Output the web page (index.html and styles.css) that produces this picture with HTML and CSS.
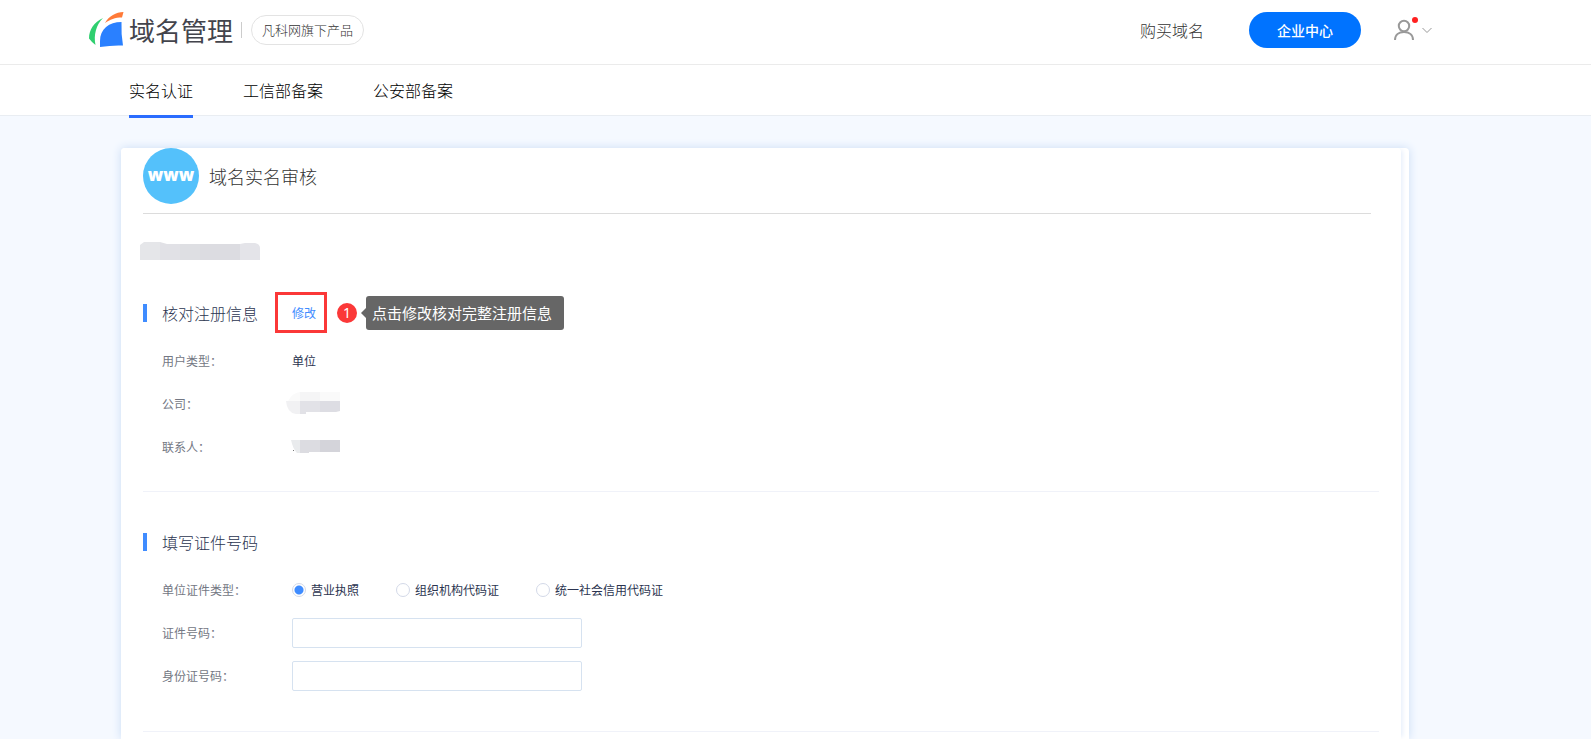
FILE: index.html
```html
<!DOCTYPE html>
<html lang="zh-CN">
<head>
<meta charset="utf-8">
<title>域名管理</title>
<link rel="stylesheet" href="styles.css">
</head>
<body>
<header class="header">
  <div class="brand">
    <svg class="logo" viewBox="0 0 35 36" aria-hidden="true">
      <path fill="#2fcf6f" d="M14 6C5 10 0 18 0 26.500Q3 30.500 6.500 33C4.500 23 7 13 14 6Z"/>
      <path fill="#ff7a38" d="M16 11C20 4 27 0 34.500 0L33 5.500C26 5.500 21 7.500 16 11Z"/>
      <path fill="#2a80ff" d="M32.500 10C20 10 11 17 11 29V35Q23 33 34 33.500Q32 22 32.500 10Z"/>
    </svg>
    <span class="brand-name">域名管理</span>
    <span class="brand-line"></span>
    <a class="pill" href="#">凡科网旗下产品</a>
  </div>
  <div class="actions">
    <a class="buy" href="#">购买域名</a>
    <button class="primary" type="button">企业中心</button>
    <button class="user" type="button" aria-label="账号">
      <svg width="40" height="26" viewBox="0 0 40 26" fill="none" aria-hidden="true">
        <circle cx="10" cy="9" r="5.200" stroke="#999" stroke-width="2"/>
        <path d="M1 23C1 17.500 5 15 10 15S19 17.500 19 23" stroke="#999" stroke-width="2"/>
        <circle cx="21" cy="3" r="3" fill="#ff2020"/>
        <path d="M28.500 11L33 15.500L37.500 11" stroke="#999"/>
      </svg>
    </button>
  </div>
</header>
<nav class="nav">
  <a class="tab tab-active" href="#">实名认证</a>
  <a class="tab" href="#">工信部备案</a>
  <a class="tab" href="#">公安部备案</a>
</nav>
<main class="page">
  <div class="card">
    <div class="panel">
      <div class="panel-head">
        <span class="www">www</span>
        <h1 class="title">域名实名审核</h1>
      </div>
      <svg class="domain-mask" width="120" height="20" viewBox="0 0 120 20" aria-hidden="true">
        <path fill="#e5e6e9" d="M0 4L4 1H20V19H0Z"/>
        <path fill="#e1e1e6" d="M20 1L27 3H40V19H20Z"/>
        <path fill="#dedfe3" d="M40 3H60V19H40Z"/>
        <path fill="#dcdce1" d="M60 3H100V19H60Z"/>
        <path fill="#e4e4e9" d="M100 3L105 2H115Q120 3 120 7V19H100Z"/>
      </svg>
      <section class="section">
        <div class="section-head">
          <h2 class="section-title">核对注册信息</h2>
          <a class="edit" href="#">修改</a>
          <span class="step">1</span>
          <span class="tip">点击修改核对完整注册信息</span>
        </div>
        <div class="row"><span class="label">用户类型<span class="colon">：</span></span><span>单位</span></div>
        <div class="row"><span class="label">公司<span class="colon">：</span></span>
          <svg class="mask" width="54" height="26" viewBox="0 0 54 26" aria-hidden="true">
            <path fill="#fafafa" d="M2 10Q6 2 14 1V10Z"/>
            <path fill="#f5f5f6" d="M14 1H34V10H14Z"/>
            <path fill="#fafafa" d="M34 1H54V10H34Z"/>
            <path fill="#f1f1f3" d="M0 10H14V23H10Q1 22 0 10Z"/>
            <path fill="#e2e2e7" d="M14 10H34V21H20V23H14Z"/>
            <path fill="#dddde3" d="M34 10H54V20L50 21H34Z"/>
          </svg>
        </div>
        <div class="row"><span class="label">联系人<span class="colon">：</span></span>
          <svg class="mask" width="54" height="14" viewBox="0 0 54 14" aria-hidden="true">
            <path fill="#e9ebed" d="M5 0H14V13H11Q7 9 5 0Z"/>
            <path fill="#dcdce1" d="M14 0H34V12H23V13H14Z"/>
            <path fill="#d4d4da" d="M34 0H54V12H34Z"/>
            <path fill="#777" d="M7 10H8V11H7Z"/>
          </svg>
        </div>
      </section>
      <section class="section section-form">
        <div class="section-head">
          <h2 class="section-title">填写证件号码</h2>
        </div>
        <div class="row" role="radiogroup" aria-labelledby="type-label">
          <span class="label" id="type-label">单位证件类型<span class="colon">：</span></span>
          <div class="options">
            <label class="option"><input class="radio" type="radio" name="type" checked>营业执照</label>
            <label class="option"><input class="radio" type="radio" name="type">组织机构代码证</label>
            <label class="option"><input class="radio" type="radio" name="type">统一社会信用代码证</label>
          </div>
        </div>
        <div class="row"><label class="label" for="cert">证件号码<span class="colon">：</span></label><input class="field" id="cert" type="text"></div>
        <div class="row"><label class="label" for="idno">身份证号码<span class="colon">：</span></label><input class="field" id="idno" type="text"></div>
      </section>
    </div>
  </div>
</main>
</body>
</html>
```
FILE: styles.css
```css
* {
  box-sizing: border-box;
}

body {
  margin: 0;
  min-height: 100vh;
  display: flex;
  flex-direction: column;
  background: #f5f9ff;
  color: #2b3450;
  font: 12px/20px "Noto Sans CJK SC", sans-serif;
}

a {
  color: inherit;
  text-decoration: none;
}

button {
  border: 0;
  font: inherit;
  cursor: pointer;
}

h1,
h2 {
  margin: 0;
  font-weight: 300;
}

.header {
  display: flex;
  align-items: center;
  justify-content: space-between;
  height: 65px;
  padding: 0 157px 5px 89px;
  border-bottom: 1px solid #ebebeb;
  background: #fff;
  color: #333;
}

.brand,
.actions {
  display: flex;
  align-items: center;
}

.logo {
  width: 35px;
  height: 36px;
}

.brand-name {
  margin-left: 5px;
  color: #43444c;
  font-size: 26px;
  line-height: 36px;
  font-weight: 400;
}

.brand-line {
  width: 1px;
  height: 16px;
  margin: 0 9px 0 8px;
  background: #ccc;
}

.pill {
  padding: 0 10px;
  border: 1px solid #e3e3e3;
  border-radius: 15px;
  font-size: 13px;
  line-height: 28px;
  font-weight: 300;
}

.buy {
  font-size: 16px;
  font-weight: 300;
}

.primary {
  height: 36px;
  margin: 0 33px 0 45px;
  padding: 0 28px;
  border-radius: 18px;
  background: #0073ff;
  color: #fff;
  font-size: 14px;
  font-weight: 500;
}

.user {
  display: flex;
  padding: 0;
  background: none;
}

.nav {
  display: flex;
  gap: 50px;
  height: 51px;
  padding-left: 129px;
  border-bottom: 1px solid #e9edf2;
  background: #fff;
  color: #000;
  font-size: 16px;
  line-height: 50px;
  font-weight: 300;
}

.tab {
  height: 53px;
}

.tab-active {
  border-bottom: 3px solid #2a6cff;
}

.page {
  display: flex;
  flex: 1;
  padding: 32px 182px 0 121px;
}

.card {
  display: flex;
  flex: 1;
  padding-right: 8px;
  border-radius: 4px 4px 0 0;
  background: #fff;
  box-shadow: 0 0 10px #c9dcf5;
}

.panel {
  flex: 1;
  padding: 0 22px;
  border-radius: 4px 4px 0 0;
  background: #fff;
  box-shadow: 4px 0 4px -2px #e9f0fb;
}

.panel-head {
  display: flex;
  align-items: center;
  gap: 10px;
  height: 66px;
  margin-right: 8px;
  padding-bottom: 9px;
  border-bottom: 1px solid #dcdcdc;
}

.www {
  width: 56px;
  height: 56px;
  border-radius: 50%;
  background: #54c1fb;
  color: #fff;
  font: 800 17px/54px "Open Sans", sans-serif;
  text-align: center;
}

.title {
  color: #333;
  font-size: 18px;
  line-height: 28px;
}

.domain-mask {
  display: block;
  margin: 27px 0 31px -3px;
}

.section {
  padding-bottom: 23px;
  border-bottom: 1px solid #f0f2f9;
}

.section-form {
  padding: 29px 0 34px;
}

.section-head {
  display: flex;
  align-items: center;
  height: 41px;
  margin-bottom: 6px;
}

.section-title {
  padding-left: 15px;
  border-left: 4px solid #3f8cff;
  font-size: 16px;
  line-height: 18px;
}

.edit {
  margin-left: 17px;
  padding: 0 8px 0 14px;
  border: 3px solid #fb3838;
  color: #3f8cff;
  line-height: 35px;
}

.step {
  width: 20px;
  margin: 0 9px 0 10px;
  border-radius: 50%;
  background: #fb3838;
  color: #fff;
  font-family: "Noto Sans", sans-serif;
  font-size: 14px;
  text-align: center;
}

.tip {
  position: relative;
  padding: 0 12px 0 6px;
  border-radius: 3px;
  background: #666;
  color: #fff;
  font-size: 15px;
  line-height: 34px;
}

.tip::before {
  content: "";
  position: absolute;
  top: 12px;
  left: -5px;
  border: 5px solid transparent;
  border-right-color: #666;
  border-left: 0;
}

.row {
  display: flex;
  align-items: center;
  height: 43px;
}

.label {
  flex: none;
  width: 130px;
  margin-left: 19px;
  color: #737783;
}

.colon {
  font-family: "Noto Sans CJK JP", sans-serif;
}

.mask {
  margin-left: -6px;
}

.options {
  display: flex;
  gap: 37px;
}

.option {
  display: flex;
  align-items: center;
  gap: 5px;
}

.radio {
  appearance: none;
  width: 14px;
  height: 14px;
  margin: 0;
  border: 1px solid #d3d9e8;
  border-radius: 50%;
  background: #fff;
}

.radio:checked {
  background: radial-gradient(circle, #3f8cff 4px, #fff 5px);
}

.field {
  width: 290px;
  height: 30px;
  padding: 0 8px;
  border: 1px solid #d6e2f0;
  border-radius: 2px;
  background: #fff;
  color: inherit;
  font: inherit;
}
```
